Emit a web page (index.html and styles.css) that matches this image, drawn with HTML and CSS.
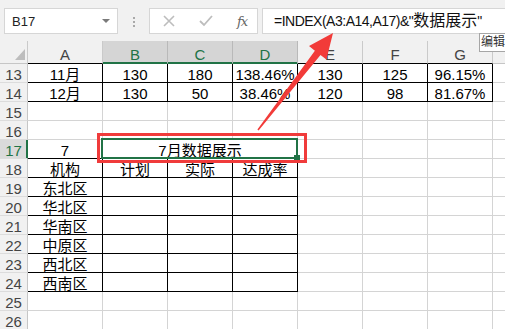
FILE: index.html
```html
<!DOCTYPE html>
<html lang="zh-CN">
<head>
    <meta charset="UTF-8">
    <meta name="viewport" content="width=device-width, initial-scale=1.0">
    <title>数据展示</title>
    <link rel="stylesheet" href="styles.css">
</head>
<body>

    <div class="app">

        <!-- Name box and formula bar -->
        <div class="toolbar">
            <div class="namebox">
                <span>B17</span>
                <span class="caret"></span>
            </div>
            <div class="grip"><i></i><i></i><i></i></div>
            <div class="fxbox">
                <svg class="icon" width="12" height="12" viewBox="0 0 12 12">
                    <path d="M1 1 L11 11 M11 1 L1 11" stroke="#bdbdbd" stroke-width="1.6" fill="none"/>
                </svg>
                <svg class="icon" width="14" height="12" viewBox="0 0 14 12">
                    <path d="M1 6 L5 10 L13 1" stroke="#bdbdbd" stroke-width="1.8" fill="none"/>
                </svg>
                <span class="fx">fx</span>
            </div>
            <div class="formula">=INDEX(A3:A14,A17)&amp;"<span class="cjk">数据展示</span>"</div>
        </div>

        <!-- Worksheet grid -->
        <table class="sheet">
            <colgroup>
                <col class="c-rh">
                <col class="c-a">
                <col class="c-n"><col class="c-n"><col class="c-n">
                <col class="c-n"><col class="c-n"><col class="c-n"><col class="c-n">
            </colgroup>
            <tr class="colhead">
                <th class="corner"><span class="tri"></span></th>
                <th class="dark">A</th>
                <th class="sel">B</th>
                <th class="sel">C</th>
                <th class="sel">D</th>
                <th class="dark">E</th>
                <th class="dark">F</th>
                <th class="dark">G</th>
                <th>H</th>
            </tr>
            <tr>
                <th class="rh">13</th>
                <td class="b">11月</td><td class="b">130</td><td class="b">180</td><td class="b">138.46%</td>
                <td class="b">130</td><td class="b">125</td><td class="b">96.15%</td><td></td>
            </tr>
            <tr>
                <th class="rh">14</th>
                <td class="b">12月</td><td class="b">130</td><td class="b">50</td><td class="b">38.46%</td>
                <td class="b">120</td><td class="b">98</td><td class="b">81.67%</td><td></td>
            </tr>
            <tr>
                <th class="rh">15</th>
                <td></td><td></td><td></td><td></td><td></td><td></td><td></td><td></td>
            </tr>
            <tr>
                <th class="rh">16</th>
                <td></td><td></td><td></td><td></td><td></td><td></td><td></td><td></td>
            </tr>
            <tr>
                <th class="rh rh-sel">17</th>
                <td class="bb">7</td><td class="b" colspan="3">7月数据展示</td>
                <td></td><td></td><td></td><td></td>
            </tr>
            <tr>
                <th class="rh">18</th>
                <td class="b">机构</td><td class="b">计划</td><td class="b">实际</td><td class="b">达成率</td>
                <td></td><td></td><td></td><td></td>
            </tr>
            <tr>
                <th class="rh">19</th>
                <td class="b">东北区</td><td class="b"></td><td class="b"></td><td class="b"></td>
                <td></td><td></td><td></td><td></td>
            </tr>
            <tr>
                <th class="rh">20</th>
                <td class="b">华北区</td><td class="b"></td><td class="b"></td><td class="b"></td>
                <td></td><td></td><td></td><td></td>
            </tr>
            <tr>
                <th class="rh">21</th>
                <td class="b">华南区</td><td class="b"></td><td class="b"></td><td class="b"></td>
                <td></td><td></td><td></td><td></td>
            </tr>
            <tr>
                <th class="rh">22</th>
                <td class="b">中原区</td><td class="b"></td><td class="b"></td><td class="b"></td>
                <td></td><td></td><td></td><td></td>
            </tr>
            <tr>
                <th class="rh">23</th>
                <td class="b">西北区</td><td class="b"></td><td class="b"></td><td class="b"></td>
                <td></td><td></td><td></td><td></td>
            </tr>
            <tr>
                <th class="rh">24</th>
                <td class="b">西南区</td><td class="b"></td><td class="b"></td><td class="b"></td>
                <td></td><td></td><td></td><td></td>
            </tr>
            <tr>
                <th class="rh">25</th>
                <td></td><td></td><td></td><td></td><td></td><td></td><td></td><td></td>
            </tr>
            <tr>
                <th class="rh">26</th>
                <td></td><td></td><td></td><td></td><td></td><td></td><td></td><td></td>
            </tr>
        </table>

        <!-- Overlays: active cell, annotation box, arrow, tooltip -->
        <div class="selection"><span class="handle"></span></div>
        <div class="mark"></div>
        <svg class="arrow" width="505" height="329" viewBox="0 0 505 329">
            <polygon points="333,33 326.4,59.5 320.5,54.9 258.6,130.5 257.4,129.5 314.9,50.7 309,46.1" fill="#f23b39"/>
        </svg>
        <div class="tooltip">编辑</div>

    </div>

</body>
</html>
```

FILE: styles.css
```css
body {
    margin: 0;
    font-family: "Liberation Sans", "Noto Sans CJK SC", sans-serif;
    background-color: #ffffff;
    overflow: hidden;
}

.app {
    position: relative;
    width: 505px;
    height: 329px;
    overflow: hidden;
}

/* Formula bar */
.toolbar {
    display: flex;
    align-items: flex-start;
    height: 41px;
    padding-top: 8px;
    box-sizing: border-box;
    background-color: #f1f1f1;
}

.namebox,
.fxbox,
.formula {
    height: 26px;
    box-sizing: border-box;
    border: 1px solid #d6d6d6;
    background-color: #ffffff;
}

.namebox {
    display: flex;
    align-items: center;
    justify-content: space-between;
    width: 114px;
    margin-left: 4px;
    padding: 0 7px 0 7px;
    font-size: 13px;
    color: #222;
}

.caret {
    width: 0;
    height: 0;
    border-left: 4px solid transparent;
    border-right: 4px solid transparent;
    border-top: 4px solid #7a7a7a;
}

.grip {
    display: flex;
    flex-direction: column;
    gap: 2px;
    width: 31px;
    padding-top: 9px;
    align-items: center;
}

.grip i {
    width: 2px;
    height: 2px;
    background-color: #a9a9a9;
}

.fxbox {
    display: flex;
    align-items: center;
    width: 109px;
    padding-left: 13px;
    gap: 24px;
}

.fx {
    font-family: "DejaVu Serif", "Liberation Serif", serif;
    font-style: italic;
    font-size: 13px;
    color: #666;
    letter-spacing: -1px;
}

.formula {
    flex: 1;
    margin-left: 4px;
    margin-right: -10px;
    padding-left: 11px;
    font-size: 14px;
    letter-spacing: -0.5px;
    line-height: 23px;
    color: #111;
    white-space: nowrap;
}

.formula .cjk {
    font-size: 16px;
    letter-spacing: 0;
}

/* Worksheet grid */
.sheet {
    table-layout: fixed;
    border-collapse: separate;
    border-spacing: 0;
    width: 558px;
    font-size: 15px;
    color: #000;
}

.c-rh { width: 28px; }
.c-a { width: 75px; }
.c-n { width: 65px; }

.sheet th,
.sheet td {
    padding: 0;
    height: 18px;
    text-align: center;
    vertical-align: bottom;
    line-height: 14px;
    white-space: nowrap;
    overflow: hidden;
    border-right: 1px solid #d4d4d4;
    border-bottom: 1px solid #d4d4d4;
}

.colhead th {
    height: 22px;
    font-weight: normal;
    line-height: 16px;
    color: #444;
    background-color: #f1f1f1;
    border-right-color: #cacaca;
    border-bottom-color: #c6c6c6;
}

.colhead th.dark {
    border-bottom-color: #000;
}

.colhead th.sel {
    background-color: #d5d5d5;
    color: #217346;
    border-right-color: #b9b9b9;
    border-bottom-color: #217346;
    box-shadow: inset 0 -1px 0 #217346;
}

.corner {
    position: relative;
}

.tri {
    position: absolute;
    right: 2px;
    bottom: 3px;
    width: 0;
    height: 0;
    border-left: 10px solid transparent;
    border-bottom: 11px solid #bdbdbd;
}

.sheet .rh {
    font-weight: normal;
    color: #444;
    background-color: #f1f1f1;
    border-right-color: #c6c6c6;
    border-bottom-color: #dcdcdc;
}

.sheet .rh-sel {
    background-color: #dadada;
    color: #217346;
    border-right-color: #217346;
    box-shadow: inset -1px 0 0 #217346;
}

.sheet td.b {
    border-right-color: #000;
    border-bottom-color: #000;
}

.sheet td.bb {
    border-bottom-color: #000;
}

/* Active cell B17:D17 */
.selection {
    position: absolute;
    left: 101px;
    top: 138px;
    width: 197px;
    height: 21px;
    box-sizing: border-box;
    border: 2px solid #217346;
}

.handle {
    position: absolute;
    right: -4px;
    bottom: -4px;
    width: 6px;
    height: 6px;
    background-color: #217346;
}

/* Red annotation */
.mark {
    position: absolute;
    left: 97px;
    top: 133px;
    width: 210px;
    height: 30px;
    box-sizing: border-box;
    border: 3px solid #f03b3b;
}

.arrow {
    position: absolute;
    left: 0;
    top: 0;
}

.tooltip {
    position: absolute;
    left: 479px;
    top: 33px;
    height: 19px;
    padding: 0 6px 0 1px;
    box-sizing: border-box;
    border: 1px solid #a6a6a6;
    background-color: #ffffff;
    font-size: 12px;
    line-height: 17px;
    color: #333;
    white-space: nowrap;
}
```
